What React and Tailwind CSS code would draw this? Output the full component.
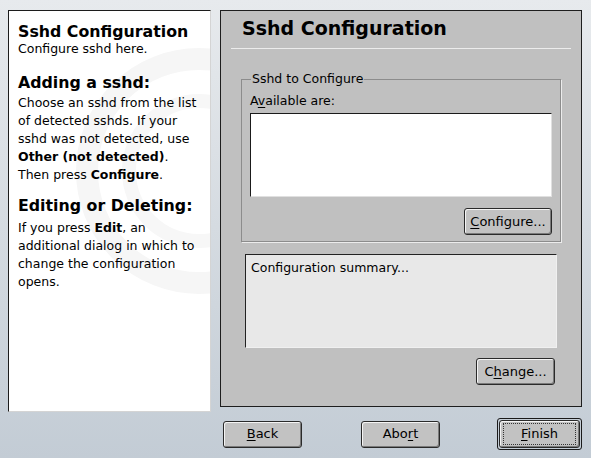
import React from 'react';

const font = { fontFamily: '"DejaVu Sans", Verdana, sans-serif' };

const U = ({ children }) => <span className="underline underline-offset-2">{children}</span>;

const Btn = ({ children, className = '' }) => (
    <div
        className={`flex items-center justify-center rounded-[3px] border border-[#2a2a2a] bg-[#c2c2c2] text-[13px] text-black shadow-[inset_1px_1px_0_#f4f4f4,inset_-1px_-1px_0_#7a7a7a] ${className}`}
    >
        {children}
    </div>
);

// faint ring logo behind the help text
const Watermark = () => (
    <svg className="pointer-events-none absolute left-[60px] top-[30px]" width="260" height="260" viewBox="0 0 260 260">
        <circle cx="130" cy="130" r="112" fill="none" stroke="#f6f6f6" strokeWidth="22" />
        <circle cx="130" cy="130" r="70" fill="none" stroke="#f7f7f7" strokeWidth="14" />
    </svg>
);

export default function App() {
    return (
        <div
            className="flex h-[458px] w-[591px] gap-[9px] overflow-hidden bg-gradient-to-b from-[#e7eaed] to-[#c3ccd5] pl-[8px] pt-[10px]"
            style={font}
        >
            {/* help panel */}
            <div className="relative h-[402px] w-[203px] overflow-hidden border-l border-t border-l-[#1c1c1c] border-t-[#1c1c1c] border-r border-b border-r-[#d4d4d4] border-b-[#d4d4d4] bg-white px-[9px] pt-[13px] text-[12.5px] leading-[18px] text-black">
                <Watermark />
                <div className="relative">
                    <h1 className="text-[15.8px] font-bold leading-[16px]">Sshd Configuration</h1>
                    <p>Configure sshd here.</p>
                    <h2 className="mt-[14px] text-[15.8px] font-bold leading-[22px]">Adding a sshd:</h2>
                    <p>
                        Choose an sshd from the list of detected sshds. If your sshd was not detected, use{' '}
                        <b>Other (not detected)</b>. Then press <b>Configure</b>.
                    </p>
                    <h2 className="mt-[11px] text-[15.8px] font-bold leading-[22px]">Editing or Deleting:</h2>
                    <p className="mt-[2px]">
                        If you press <b>Edit</b>, an additional dialog in which to change the configuration opens.
                    </p>
                </div>
            </div>

            {/* main column */}
            <div className="flex w-[362px] flex-col">
                <div className="flex h-[397px] flex-col border border-[#1e1e1e] bg-[#c0c0c0] px-[10px] text-[12.5px] text-black">
                    <h1 className="pl-[11px] pt-[6px] text-[19px] font-bold leading-[22px]">Sshd Configuration</h1>
                    <div className="mt-[9px] h-px bg-[#ececec]" />

                    <fieldset className="mx-[10px] mt-[23px] border border-[#8c8c8c] px-[8px] pb-[6px] shadow-[1px_1px_0_#ececec]">
                        <legend className="ml-[1px] px-[1px] leading-[14px]">Sshd to Configure</legend>
                        <div className="pt-[6px] leading-[18px]">
                            A<U>v</U>ailable are:
                        </div>
                        <div className="mt-[3px] h-[84px] border-l border-t border-l-[#1a1a1a] border-t-[#1a1a1a] border-r border-b border-r-[#e0e0e0] border-b-[#e0e0e0] bg-white" />
                        <div className="mt-[11px] flex justify-end">
                            <Btn className="h-[27px] w-[88px]">
                                <span>
                                    <U>C</U>onfigure...
                                </span>
                            </Btn>
                        </div>
                    </fieldset>

                    <div className="mx-[14px] mt-[12px] h-[94px] border-l border-t border-l-[#222] border-t-[#222] border-r border-b border-r-[#f0f0f0] border-b-[#f0f0f0] bg-[#e8e8e8] px-[5px] pt-[5px] leading-[16px]">
                        Configuration summary...
                    </div>

                    <div className="mt-[10px] flex justify-end pr-[16px]">
                        <Btn className="h-[27px] w-[79px]">
                            <span>
                                C<U>h</U>ange...
                            </span>
                        </Btn>
                    </div>
                </div>

                <div className="mt-[11px] flex items-center">
                    <Btn className="ml-[3px] h-[27px] w-[80px]">
                        <span>
                            <U>B</U>ack
                        </span>
                    </Btn>
                    <Btn className="ml-[59px] h-[27px] w-[80px]">
                        <span>
                            Abo<U>r</U>t
                        </span>
                    </Btn>
                    <div className="ml-[57px] rounded-[3px] border border-[#1a1a1a] p-px">
                        <Btn className="h-[28px] w-[81px]">
                            <span className="flex h-[22px] w-[73px] items-center justify-center border border-dotted border-[#333]">
                                <span>
                                    <U>F</U>inish
                                </span>
                            </span>
                        </Btn>
                    </div>
                </div>
            </div>
        </div>
    );
}
